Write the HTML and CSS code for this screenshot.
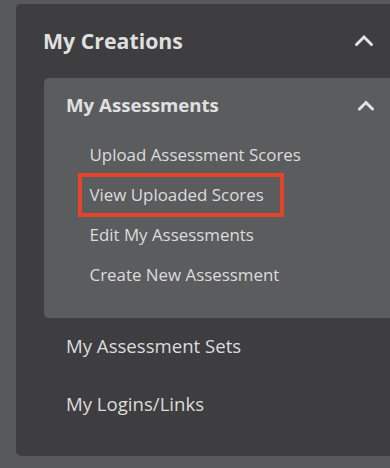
FILE: index.html
```html
<!DOCTYPE html>
<html lang="en">
<head>
    <meta charset="UTF-8">
    <meta name="viewport" content="width=device-width, initial-scale=1.0">
    <link rel="stylesheet" href="styles.css">
    <title>My Creations</title>
</head>
<body>
    <div class="painel">
        <div class="cabecalho">
            <h2>My Creations</h2>
            <svg class="seta" width="20" height="13" viewBox="0 0 20 13">
                <polyline points="2.5,10.5 10,3 17.5,10.5" />
            </svg>
        </div>
        <div class="cartao">
            <div class="cabecalho2">
                <h3>My Assessments</h3>
                <svg class="seta" width="18" height="11" viewBox="0 0 18 11">
                    <polyline points="2.5,9 9,2.5 15.5,9" />
                </svg>
            </div>
            <ul class="lista">
                <li><a href="#">Upload Assessment Scores</a></li>
                <li><a href="#" class="ativo">View Uploaded Scores</a></li>
                <li><a href="#">Edit My Assessments</a></li>
                <li><a href="#">Create New Assessment</a></li>
            </ul>
        </div>
        <a href="#" class="item primeiro">My Assessment Sets</a>
        <a href="#" class="item">My Logins/Links</a>
    </div>
</body>
</html>
```
FILE: styles.css
```css
body, html {
    margin: 0;
    padding: 0;
    height: 100%;
    overflow: hidden;
}

body {
    background-color: #58595b;
    color: #dedede;
    font-family: "Open Sans", Arial, sans-serif;
    padding: 4px 0 0 16px;
    box-sizing: border-box;
}

a {
    color: #dcdcdc;
    text-decoration: none;
}

/* the panel runs on past the right edge of the window, so no right corners */
.painel {
    background-color: #3e3e40;
    border-radius: 5px 0 0 5px;
    padding: 22px 0 23px 28px;
}

.cabecalho {
    display: flex;
    align-items: center;
    justify-content: space-between;
    padding-right: 16px;
    margin-bottom: 23px;
}

.cabecalho h2 {
    margin: 0 0 0 -1px;
    font-size: 21.3px;
    font-weight: 700;
    line-height: 29px;
    color: #dfdfdf;
}

.seta polyline {
    fill: none;
    stroke: #e2e2e2;
    stroke-width: 3;
    stroke-linecap: round;
    stroke-linejoin: miter;
}

.cartao {
    background-color: #5b5c5e;
    border-radius: 5px 0 0 5px;
    padding: 14px 0 23px 22px;
}

.cabecalho2 {
    display: flex;
    align-items: center;
    justify-content: space-between;
    padding-right: 15px;
}

.cabecalho2 h3 {
    margin: 0;
    font-size: 18.65px;
    font-weight: 700;
    line-height: 26px;
    color: #e0e0e0;
}

.lista {
    list-style: none;
    margin: 0;
    padding: 17px 0 0 16px;
}

.lista li {
    height: 40px;
    display: flex;
    align-items: center;
}

.lista a {
    display: inline-block;
    font-size: 16.9px;
    line-height: 36px;
    padding: 0 16px 0 7.5px;
}

.lista a.ativo {
    outline: 4px solid #e5432a;
}

.item {
    display: block;
    font-size: 18.6px;
    line-height: 28px;
    padding: 15px 0 15px 22px;
}

.item.primeiro {
    padding-top: 14px;
}
```
